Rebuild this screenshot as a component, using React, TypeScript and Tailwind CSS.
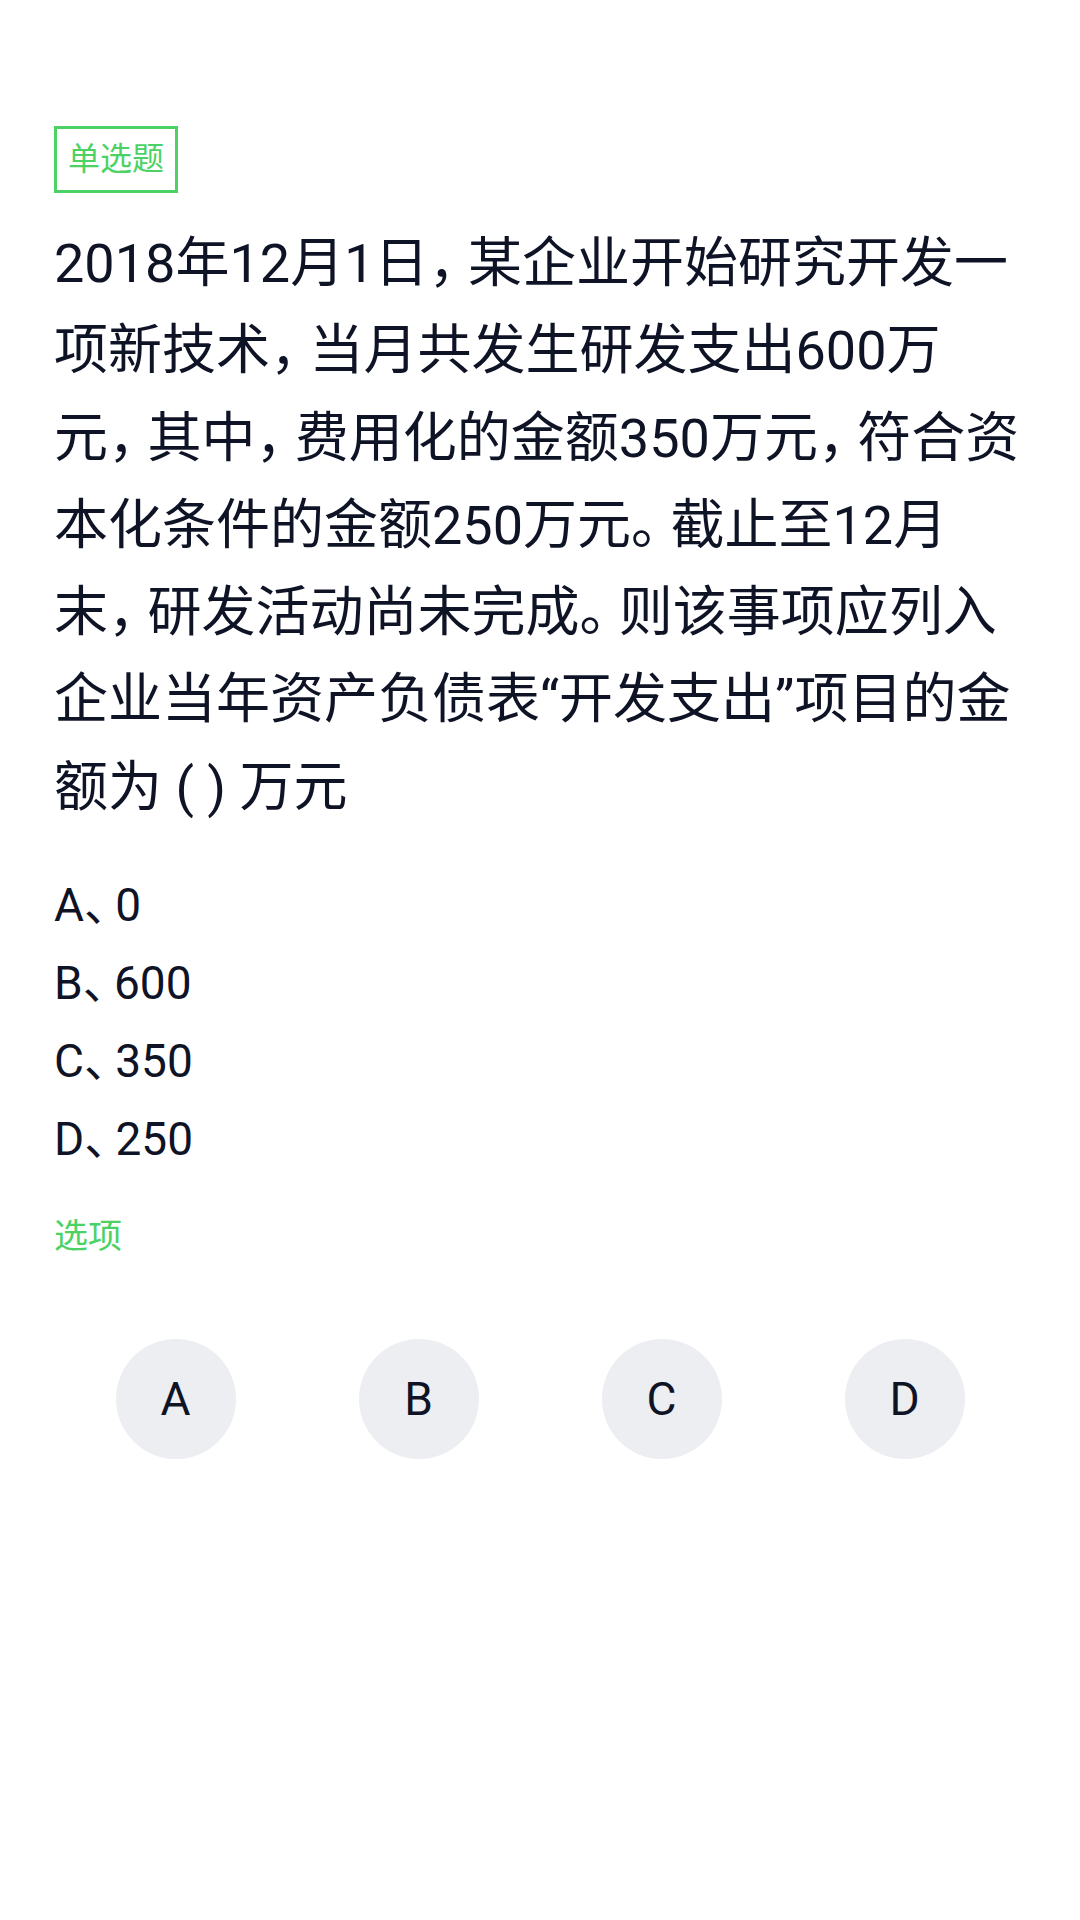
const PUNCT = new Set(["，", "。", "、"]);

// narrow CJK punctuation the way the app renders it
function Text({ value }: { value: string }) {
  return (
    <>
      {Array.from(value).map((ch, i) =>
        PUNCT.has(ch) ? (
          <span key={i} className={ch === "、" ? "tracking-[-0.32em]" : "tracking-[-0.27em]"}>
            {ch}
          </span>
        ) : (
          <span key={i}>{ch}</span>
        )
      )}
    </>
  );
}

const questionLines = [
  "2018年12月1日，某企业开始研究开发一",
  "项新技术，当月共发生研发支出600万",
  "元，其中，费用化的金额350万元，符合资",
  "本化条件的金额250万元。截止至12月",
  "末，研发活动尚未完成。则该事项应列入",
  "企业当年资产负债表“开发支出”项目的金",
  "额为 ( ) 万元",
];

const options = [
  { key: "A", value: "0" },
  { key: "B", value: "600" },
  { key: "C", value: "350" },
  { key: "D", value: "250" },
];

export default function App() {
  return (
    <div className="min-h-[1920px] bg-white px-[54px] pt-[126px] font-[Roboto,'Noto_Sans_CJK_SC',sans-serif] text-[#0f1326]">
      <div className="flex">
        <span className="border-[3px] border-[#4cd264] px-[11px] py-[8px] text-[32px] leading-[45px] text-[#4cd264]">
          单选题
        </span>
      </div>

      <div className="mt-[27px] text-[54px] leading-[87.3px]">
        {questionLines.map((line, i) => (
          <div key={i} className="whitespace-nowrap">
            <Text value={line} />
          </div>
        ))}
      </div>

      <div className="mt-[35px] text-[46px] leading-[78px]">
        {options.map((o) => (
          <div key={o.key} className="whitespace-nowrap">
            <Text value={`${o.key}、${o.value}`} />
          </div>
        ))}
      </div>

      <div className="mt-[34px] text-[34px] leading-[48px] text-[#4cd264]">选项</div>

      <div className="mt-[79px] grid grid-cols-4">
        {options.map((o) => (
          <div key={o.key} className="flex justify-center">
            <button className="flex h-[120px] w-[120px] items-center justify-center rounded-full bg-[#eceef1] text-[46px] leading-none text-[#0f1326]">
              {o.key}
            </button>
          </div>
        ))}
      </div>
    </div>
  );
}
